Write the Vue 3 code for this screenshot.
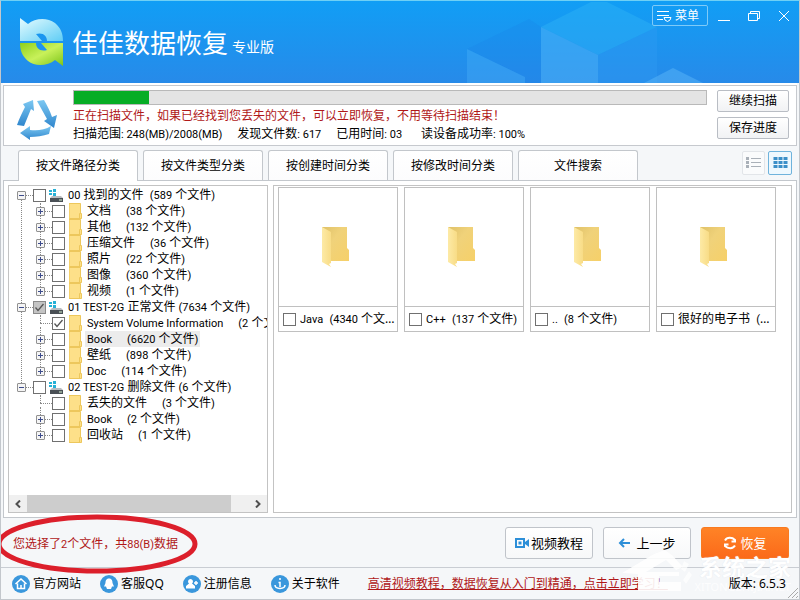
<script setup>
import { h, ref } from 'vue'

// Sets Latin letters and digits one size below the Chinese text around them.
const MixedText = (props) =>
  props.text.split(/([\x21-\x7e]+(?: [\x21-\x7e]+)*)/).map((part, i) => (i % 2 ? h('span', { class: 'latin' }, part) : part))
MixedText.props = ['text']

const progress = ref(11.8)
const activeTab = ref(0)
const view = ref('grid')
const tabs = ['按文件路径分类', '按文件类型分类', '按创建时间分类', '按修改时间分类', '文件搜索']
const facts = ['扫描范围: 248(MB)/2008(MB)', '发现文件数: 617', '已用时间: 03', '读设备成功率: 100%']

const tree = ref([
  {
    name: '00 找到的文件', count: '  (589 个文件)', state: '',
    children: [
      { name: '文档', count: '(38 个文件)', open: true },
      { name: '其他', count: '(132 个文件)', open: true },
      { name: '压缩文件', count: '(36 个文件)', open: true },
      { name: '照片', count: '(22 个文件)', open: true },
      { name: '图像', count: '(360 个文件)', open: true },
      { name: '视频', count: '(1 个文件)', open: true }
    ]
  },
  {
    name: '01 TEST-2G 正常文件', count: ' (7634 个文件)', state: 'partial',
    children: [
      { name: 'System Volume Information', count: '(2 个文件)', open: false, checked: true },
      { name: 'Book', count: '(6620 个文件)', open: true, current: true },
      { name: '壁纸', count: '(898 个文件)', open: true },
      { name: 'Doc', count: '(114 个文件)', open: true }
    ]
  },
  {
    name: '02 TEST-2G 删除文件', count: ' (6 个文件)', state: '',
    children: [
      { name: '丢失的文件', count: '(3 个文件)', open: false },
      { name: 'Book', count: '(2 个文件)', open: true },
      { name: '回收站', count: '(1 个文件)', open: true }
    ]
  }
])

const cards = ['Java  (4340 个文件)', 'C++  (137 个文件)', '..  (8 个文件)', '很好的电子书  (12 个文件)']
</script>

<template>
  <div class="window">
    <header class="titlebar">
      <svg class="cubes" viewBox="400 0 400 82" preserveAspectRatio="xMaxYMax slice" aria-hidden="true">
        <path d="M468 48 530 18 542 26V82H526V76Z" fill="#1b7fe8" opacity=".2" />
        <path d="M468 48 526 76V82H468Z" fill="#4db4fa" opacity=".35" />
        <path d="M542 26 592 1H608L658 26 599 54Z" fill="#2fb4f6" opacity=".45" />
        <path d="M542 26 599 54V82H542Z" fill="#4fb4f8" opacity=".5" />
        <path d="M599 54 658 26V82H599Z" fill="#2f9cf2" opacity=".4" />
        <path d="M645 82 674 67 704 82Z" fill="#5ab6f8" opacity=".5" />
      </svg>
      <svg class="logo" viewBox="0 0 44 50" aria-hidden="true">
        <defs>
          <linearGradient id="lg-top" x1="0" y1="0" x2="1" y2="1">
            <stop offset="0" stop-color="#e6fcff" /><stop offset="1" stop-color="#5fcdf5" />
          </linearGradient>
          <linearGradient id="lg-bottom" x1="0" y1="0" x2="1" y2="1">
            <stop offset="0" stop-color="#8ed01c" /><stop offset=".5" stop-color="#c8f15a" /><stop offset="1" stop-color="#7cc41a" />
          </linearGradient>
        </defs>
        <path d="M0 1 8 7C15 1 27 0 35 6 41 11 43 17 43 24H27C27 19 23 15 16 17L22 24H0Z" fill="url(#lg-top)" />
        <path d="M43 49 35 43C28 49 15 50 8 44 2 39 0 33 0 26H16C16 31 20 35 27 33L21 26H43Z" fill="url(#lg-bottom)" />
      </svg>
      <h1>佳佳数据恢复</h1>
      <span class="edition">专业版</span>
      <div class="window-controls">
        <button class="menu" type="button">
          <svg viewBox="0 0 15 12" aria-hidden="true"><path d="M0 1.5H12M0 5.5H12M0 9.5H6M7 7.5H14L13 10 10.5 11.5 8 10Z" /></svg>菜单
        </button>
        <button type="button" aria-label="最小化"><svg viewBox="0 0 12 12"><path d="M0 10.5H12" /></svg></button>
        <button type="button" aria-label="还原"><svg viewBox="0 0 12 12"><path d="M.5 3.5H9.5V10.5H.5ZM2.5 3V1.5H11.5V8.5H10" /></svg></button>
        <button type="button" aria-label="关闭"><svg viewBox="0 0 12 12"><path d="M1 1 11 11M11 1 1 11" /></svg></button>
      </div>
    </header>

    <section class="status">
      <svg class="recycle" viewBox="0 0 42 42" aria-hidden="true">
        <defs>
          <linearGradient id="rc" x1="0" y1="0" x2="0" y2="1">
            <stop offset="0" stop-color="#7cc8f2" /><stop offset="1" stop-color="#2f86cd" />
          </linearGradient>
        </defs>
        <path d="M7 5 17 1 18 12 15 10 8 27 1 26C3 20 6 14 9 8Z" fill="url(#rc)" />
        <path d="M21 2 28 1C31 6 34 12 36 18L41 16 38 29 28 22 31 20Z" fill="url(#rc)" />
        <path d="M35 27 33 35C27 37 20 38 14 38L14 41 4 34 14 27V31C21 32 29 31 35 27Z" fill="url(#rc)" />
      </svg>
      <div class="scan">
        <div class="progress" role="progressbar" :aria-valuenow="progress" aria-label="扫描进度">
          <div class="progress-fill" :style="{ width: progress + '%' }"></div>
        </div>
        <p class="notice">正在扫描文件，如果已经找到您丢失的文件，可以立即恢复，不用等待扫描结束！</p>
        <p class="facts">
          <span v-for="f in facts" :key="f"><MixedText :text="f" /></span>
        </p>
      </div>
      <div class="scan-actions">
        <button type="button">继续扫描</button>
        <button type="button">保存进度</button>
      </div>
    </section>

    <nav class="tabs">
      <button v-for="(t, i) in tabs" :key="t" type="button" :class="{ active: i === activeTab }" @click="activeTab = i">{{ t }}</button>
      <div class="views">
        <button type="button" aria-label="列表" :class="{ on: view === 'list' }" @click="view = 'list'">
          <svg viewBox="0 0 15 12"><path d="M0 0h3v3H0zM0 4h3v3H0zM0 8h3v3H0zM5 1h10v1H5zM5 5h10v1H5zM5 9h10v1H5z" fill="#a9b0b8" /></svg>
        </button>
        <button type="button" aria-label="缩略图" :class="{ on: view === 'grid' }" @click="view = 'grid'">
          <svg viewBox="0 0 14 12"><path d="M0 0h4v3H0zM5 0h4v3H5zM10 0h4v3h-4zM0 4h4v3H0zM5 4h4v3H5zM10 4h4v3h-4zM0 8h4v3H0zM5 8h4v3H5zM10 8h4v3h-4z" fill="#3b8fc8" /></svg>
        </button>
      </div>
    </nav>

    <main class="workspace">
      <aside class="tree-pane">
        <ul class="tree">
          <li v-for="root in tree" :key="root.name" class="root">
            <div class="row">
              <button class="toggle minus" type="button" aria-label="折叠"></button><i class="dots"></i>
              <label>
                <input type="checkbox" :checked="root.state === 'partial'" :class="root.state" />
                <svg class="drive" viewBox="0 0 16 13" aria-hidden="true">
                  <path d="M1 1h3v2H1zM5 0h3v3H5zM1 4h3v2H1zM5 4h3v3H5z" fill="#27b1d6" />
                  <path d="M4 7H13L15 9H2Z" fill="#b9bcc0" /><path d="M2 9H15V13H2Z" fill="#4a5056" /><path d="M11 10.5h3v1h-3z" fill="#d5f3d0" />
                </svg>
                <span class="name"><MixedText :text="root.name + root.count" /></span>
              </label>
            </div>
            <ul>
              <li v-for="c in root.children" :key="c.name" class="row child">
                <button v-if="c.open" class="toggle" type="button" aria-label="展开"></button>
                <i v-else class="toggle-gap"></i><i class="dots"></i>
                <label>
                  <input type="checkbox" :checked="c.checked" />
                  <svg class="folder" viewBox="0 0 13 16" aria-hidden="true">
                    <path d="M0 0H11.5V10L12.5 11V16H1L0 15Z" fill="#fde089" /><path d="M0 0H1V16H0Z" fill="#f6d26b" />
                    <path d="M.5 15.5H12.5V10.5H10.5V15M0 .5H11.5V10" stroke="#edc75c" fill="none" />
                  </svg>
                  <span class="item" :class="{ current: c.current }"><span><MixedText :text="c.name" /></span><span><MixedText :text="c.count" /></span></span>
                </label>
              </li>
            </ul>
          </li>
        </ul>
        <div class="scrollbar">
          <button type="button" aria-label="向左"><svg viewBox="0 0 6 8"><path d="M5 .5 1.5 4 5 7.5" /></svg></button>
          <div class="track"><div class="thumb"></div></div>
          <button type="button" aria-label="向右"><svg viewBox="0 0 6 8"><path d="M1 .5 4.5 4 1 7.5" /></svg></button>
        </div>
      </aside>
      <section class="grid-pane">
        <article v-for="c in cards" :key="c" class="card">
          <div class="thumbnail">
            <svg viewBox="0 0 28 41" aria-hidden="true">
              <defs>
                <linearGradient id="fb" x1="0" y1="0" x2="1" y2="1"><stop offset="0" stop-color="#dfc168" /><stop offset=".4" stop-color="#f0d27a" /><stop offset="1" stop-color="#f6d069" /></linearGradient>
                <linearGradient id="ff" x1="0" y1="0" x2="1" y2="0"><stop offset="0" stop-color="#fdeaa6" /><stop offset="1" stop-color="#f8dc86" /></linearGradient>
              </defs>
              <path d="M0 0H25V21L27 23V34H6Z" fill="url(#fb)" />
              <path d="M0 0 9 5V36L7 37 9 40 0 35Z" fill="url(#ff)" />
            </svg>
          </div>
          <label><input type="checkbox" /><span class="caption"><MixedText :text="c" /></span></label>
        </article>
      </section>
    </main>

    <div class="actions">
      <p><MixedText text="您选择了2个文件，共88(B)数据" /></p>
      <button type="button">
        <svg viewBox="0 0 14 12" aria-hidden="true"><path d="M1 2H9V10H1Z" fill="none" stroke="#2d8fd8" stroke-width="2" /><path d="M3.5 4.5H6.5V7.5H3.5ZM10 5 14 2V10L10 7Z" fill="#2d8fd8" /></svg>视频教程
      </button>
      <button type="button" class="back">
        <svg viewBox="0 0 14 12" aria-hidden="true"><path d="M6 2 2 6 6 10M2 6H12" fill="none" stroke="#2d8fd8" stroke-width="2" /></svg>上一步
      </button>
      <button type="button" class="recover">
        <svg viewBox="0 0 14 14" aria-hidden="true"><path d="M2 4.5C4 1 9 1 12 4V6.5M8.5 5.5H12.5M12 9.5C10 13 5 13 2 10V7.5M5.5 8.5H1.5" fill="none" stroke="#fff" stroke-width="2" /></svg>恢复
      </button>
    </div>

    <footer class="links">
      <a href="#site">
        <svg viewBox="0 0 18 18" aria-hidden="true"><circle cx="9" cy="9" r="9" fill="#3a97dc" /><path d="M3.5 9 9 4 14.5 9M5.5 8.5V13.5H12.5V8.5M9 10V13" /></svg>官方网站</a>
      <a href="#qq">
        <svg viewBox="0 0 18 18" aria-hidden="true"><circle cx="9" cy="9" r="9" fill="#3a97dc" /><path d="M9 3.5C6 3.5 5.5 6 5.5 8L4 11.5 6 11.5 7 14H11L12 11.5H14L12.5 8C12.5 6 12 3.5 9 3.5Z" class="solid" /></svg>客服QQ</a>
      <a href="#register">
        <svg viewBox="0 0 18 18" aria-hidden="true"><circle cx="9" cy="9" r="9" fill="#3a97dc" /><path d="M7.5 4A2.5 2.5 0 0 1 9 8.5L12 11V13.5H3V11L6 8.5A2.5 2.5 0 0 1 7.5 4Z" class="solid" /><path d="M13 6V10M11 8H15" /></svg>注册信息</a>
      <a href="#about">
        <svg viewBox="0 0 18 18" aria-hidden="true"><circle cx="9" cy="9" r="9" fill="#3a97dc" /><path d="M9 3V5M7.5 7.5H9V12M4 10C4 14.5 14 14.5 14 10" /></svg>关于软件</a>
      <a href="#tutorial" class="promo">高清视频教程，数据恢复从入门到精通，点击立即学习！</a>
      <span class="version">版本: 6.5.3</span>
      <svg class="grip" viewBox="0 0 10 10" aria-hidden="true"><path d="M0 10 10 0M4 10 10 4M8 10 10 8" /></svg>
    </footer>

    <svg class="marker" viewBox="0 0 200 60" aria-hidden="true"><ellipse cx="97" cy="30" rx="98" ry="27" /></svg>
    <div class="watermark">
      <svg viewBox="0 0 70 46" aria-hidden="true">
        <path d="M0 25 32 6 43 2 50 7 61 19 54 22 44 12 24 24H57V28H37V34H59V43H16V26Z" />
        <path d="M62 13 67 16 63 24 59 21ZM67 23 70 27 64 36 61 32Z" opacity=".8" />
      </svg>
      <div><strong>系统之家</strong><small>XITONGZHIJIA.NET</small></div>
    </div>
  </div>
</template>

<style>
html, body { margin: 0; }
</style>

<style scoped>
.window, .window * { box-sizing: border-box; }
.window {
  position: relative;
  display: flex;
  flex-direction: column;
  min-height: 100vh;
  overflow: hidden;
  border: 1px solid #c3c7cc;
  border-top-color: #6fd0f5;
  background: #f5f7f9;
  color: #000;
  font: 12px/16px "Noto Sans", "Noto Sans CJK SC", sans-serif;
}
.window :deep(.latin) { font-family: Roboto, "Noto Sans", sans-serif; font-size: 11px; line-height: 1; }
h1, p, ul { margin: 0; padding: 0; }
ul { list-style: none; }
button { font: inherit; color: inherit; padding: 0; margin: 0; }
svg { display: block; flex: none; }
label { display: flex; align-items: center; min-width: 0; }
input[type="checkbox"] {
  appearance: none;
  flex: none;
  width: 13px;
  height: 13px;
  margin: 0;
  border: 1px solid #707070;
  background: #fff;
}
input[type="checkbox"]:checked {
  background: #fff url("data:image/svg+xml,%3Csvg xmlns='http://www.w3.org/2000/svg' viewBox='0 0 11 11'%3E%3Cpath d='M1.5 5.5 4 8.5 9.5 2' fill='none' stroke='%23555' stroke-width='1.3'/%3E%3C/svg%3E") center / 11px 11px no-repeat;
}
input[type="checkbox"].partial { background-color: #c4c4c4; border-color: #8a8a8a; }

.titlebar {
  position: relative;
  display: flex;
  align-items: flex-start;
  height: 82px;
  padding-left: 19px;
  background: linear-gradient(#119ef5, #278ae9);
  color: #fff;
}
.cubes { position: absolute; right: 0; top: 0; width: 50%; height: 100%; }
.logo { width: 44px; height: 50px; margin-top: 16px; }
h1 { margin: 22px 0 0 8px; font-size: 26px; line-height: 40px; font-weight: 400; }
.edition { margin: 36px 0 0 4px; font-size: 14px; line-height: 20px; }
.window-controls { position: relative; display: flex; align-items: center; gap: 18px; margin: 4px 9px 0 auto; }
.window-controls button { display: flex; align-items: center; border: 0; background: none; }
.window-controls svg { width: 12px; height: 12px; fill: none; stroke: #fff; }
.window-controls .menu { height: 21px; padding: 0 8px 0 4px; gap: 3px; margin-right: -8px; border: 1px solid #7fcbf8; border-radius: 2px; }
.window-controls .menu svg { width: 15px; }

.status {
  display: flex;
  gap: 10px;
  height: 61px;
  margin: 2px 2px 0;
  padding: 4px 7px 0 12px;
  border: 1px solid #c6c9ce;
  background: #fff;
  box-shadow: 0 -2px 0 #fff;
}
.recycle { width: 42px; height: 42px; margin-top: 9px; }
.scan { flex: 1; min-width: 0; margin-left: 5px; }
.progress { height: 15px; border: 1px solid #b9b9b9; background: #e4e4e4; }
.progress-fill { height: 100%; background: #07ad25; }
.notice { margin-top: 3px; color: #b01818; white-space: nowrap; }
.facts { display: flex; gap: 15px; margin-top: 2px; white-space: nowrap; }
.facts > span:last-child { margin-left: 4px; }
.scan-actions { display: flex; flex-direction: column; gap: 5px; width: 72px; }
.scan-actions button { height: 22px; border: 1px solid #b9bdc4; border-radius: 2px; background: linear-gradient(#fff, #f1f2f4); }

.tabs { display: flex; gap: 5px; margin: 4px 2px 0; padding: 0 5px 0 15px; }
.tabs > button {
  width: 120px;
  height: 30px;
  border: 1px solid #c3c7cc;
  border-bottom: 0;
  border-radius: 3px 3px 0 0;
  background: linear-gradient(#fff, #fcfcfd);
}
.tabs > .active { position: relative; height: 31px; margin-bottom: -1px; background: #fff; }
.views { display: flex; gap: 3px; margin: 1px 0 0 auto; }
.views button { display: grid; place-items: center; width: 23px; height: 24px; border: 1px solid #e2e5e9; border-radius: 2px; background: #fafbfc; }
.views .on { width: 24px; border-color: #6fb3dc; background: #eef8fe; }
.views svg { width: 15px; height: 12px; }

.workspace { display: flex; flex: 1; gap: 5px; min-height: 338px; margin: 0 2px; padding: 4px; border: 1px solid #c3c7cc; background: #fff; }
.tree-pane { display: flex; flex-direction: column; flex: none; width: 260px; border: 1px solid #c3c3c3; overflow: hidden; }
.tree { flex: 1; padding: 1px 0 0 8px; white-space: pre; }
.root { position: relative; }
.row { display: flex; align-items: center; height: 16px; }
.child { position: relative; padding-left: 19px; }
.root:not(:last-child)::before { content: ""; position: absolute; left: 4px; top: 12px; bottom: -4px; border-left: 1px dotted #888; }
.child::before { content: ""; position: absolute; left: 23px; top: -4px; height: 12px; border-left: 1px dotted #888; }
.child:first-child::before { top: 0; height: 8px; }
.toggle, .toggle-gap { position: relative; flex: none; width: 9px; height: 9px; }
.toggle { border: 1px solid #919191; border-radius: 1px; background: linear-gradient(#3d4c8c, #3d4c8c) center / 5px 1px no-repeat, linear-gradient(#3d4c8c, #3d4c8c) center / 1px 5px no-repeat, #f5f5f5; }
.toggle.minus { background: linear-gradient(#3d4c8c, #3d4c8c) center / 5px 1px no-repeat, #f5f5f5; }
.dots { flex: none; width: 7px; border-top: 1px dotted #888; }
.toggle-gap + .dots { width: 12px; margin-left: -5px; }
.drive { width: 16px; height: 13px; margin: 0 4px 0 2px; }
.folder { width: 13px; height: 16px; margin: 0 3px 0 4px; }
.item { display: flex; gap: 15px; padding: 0 2px; }
.current { background: #ececec; }
.scrollbar { display: flex; height: 17px; background: #f0f0f0; }
.scrollbar button { display: grid; place-items: center; width: 18px; border: 0; background: none; }
.scrollbar svg { width: 6px; height: 8px; fill: none; stroke: #505050; stroke-width: 2; }
.track { flex: 1; }
.thumb { width: 92%; height: 100%; background: #cdcdcd; }

.grid-pane { display: flex; flex: 1; flex-wrap: wrap; align-content: flex-start; gap: 6px; min-width: 0; padding: 1px 4px; border: 1px solid #c3c3c3; }
.card { width: 120px; border: 1px solid #c0c0c0; }
.thumbnail { display: grid; place-items: center; height: 119px; border-bottom: 1px solid #c0c0c0; }
.thumbnail svg { width: 28px; height: 41px; margin-right: 4px; }
.card label { height: 24px; padding: 0 1px 0 4px; gap: 4px; }
.caption { overflow: hidden; text-overflow: ellipsis; white-space: pre; }

.actions { display: flex; align-items: center; gap: 10px; height: 49px; padding: 0 10px 0 12px; }
.actions p { margin-right: auto; padding-top: 3px; color: #b01818; }
.actions button {
  display: flex;
  align-items: center;
  justify-content: center;
  gap: 2px;
  width: 88px;
  height: 32px;
  border: 1px solid #c0c4ca;
  border-radius: 3px;
  background: linear-gradient(#fff, #f7f8f9);
  font-size: 13px;
}
.actions svg { width: 14px; height: 12px; }
.actions .back { gap: 4px; }
.actions .recover { gap: 3px; border-color: #f97a1f; background: linear-gradient(#ff8326, #fb6a1a); color: #fff; }
.actions .recover svg { height: 14px; }

.links { position: relative; display: flex; align-items: center; height: 32px; padding: 0 13px 0 11px; gap: 19px; border-top: 1px solid #c9cdd3; white-space: nowrap; }
.links a { display: flex; align-items: center; gap: 3px; color: #000; text-decoration: none; }
.links a svg { width: 18px; height: 18px; fill: none; stroke: #fff; stroke-width: 1.5; }
.links a circle { stroke: none; }
.links .solid { fill: #fff; stroke: none; }
.links .promo { display: inline; margin-left: 9px; color: #b01818; text-decoration: underline; }
.version { position: relative; z-index: 2; margin-left: auto; }
.grip { position: absolute; right: 1px; bottom: 1px; width: 10px; height: 10px; stroke: #aaa; }

.marker { position: absolute; left: -1px; bottom: 25px; width: 200px; height: 60px; fill: none; stroke: #dc1f2b; stroke-width: 5; pointer-events: none; }
.watermark { position: absolute; right: 8px; bottom: 4px; display: flex; gap: 2px; color: #fff; pointer-events: none; }
.watermark svg { width: 70px; height: 46px; margin-top: 3px; fill: #fff; opacity: .9; }
.watermark div { display: flex; flex-direction: column; align-items: flex-end; padding-top: 10px; }
.watermark strong { font-size: 23px; line-height: 24px; text-shadow: 0 0 1px #dde2ea; }
.watermark small { font-size: 11px; line-height: 16px; opacity: .8; }
</style>
